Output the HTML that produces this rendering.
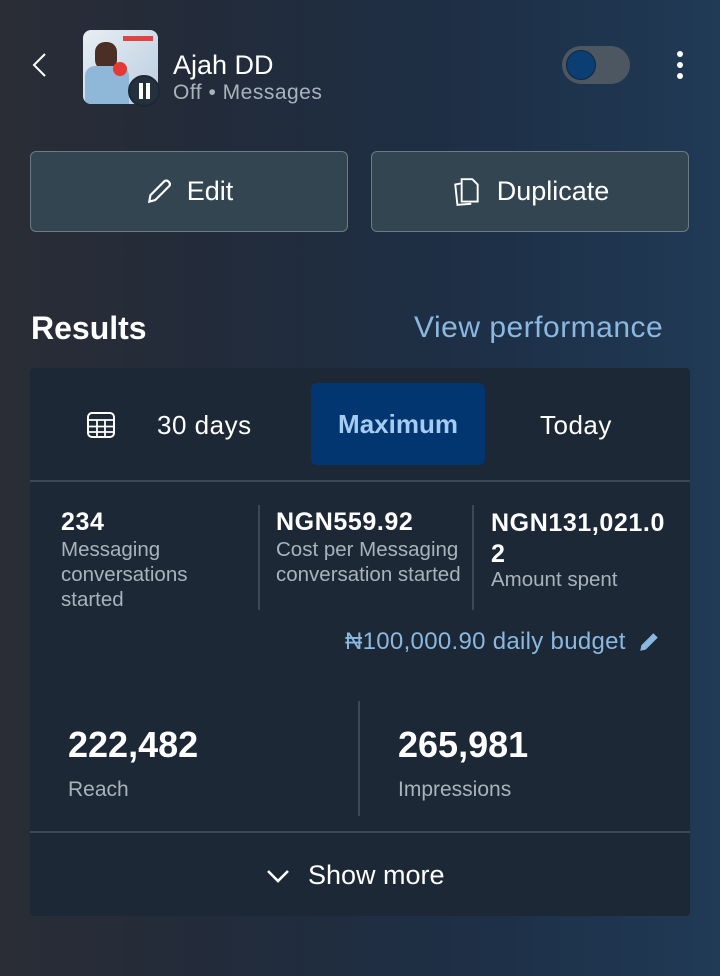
<!DOCTYPE html>
<html><head><meta charset="utf-8"><style>
*{margin:0;padding:0;box-sizing:border-box}
body{width:720px;height:976px;overflow:hidden;font-family:"Liberation Sans",sans-serif;color:#fff;
background:linear-gradient(90deg,#2a2d36 0%,#222b3a 30%,#1d3048 70%,#213a55 100%);position:relative}
.a{position:absolute;white-space:nowrap}
.btn{position:absolute;top:151px;width:318px;height:81px;border:1.5px solid #6a7a86;border-radius:6px;background:#344552;display:flex;align-items:center;justify-content:center;font-size:27px;gap:14px}
.card{position:absolute;left:30px;top:368px;width:660px;height:548px;background:#1c2836;border-radius:4px}
.lbl{color:#a9b3bc;font-size:20.5px;line-height:25px}
.big{font-weight:bold;font-size:25px;letter-spacing:0.6px}
</style></head><body>
<svg class="a" style="left:30px;top:52px" width="18" height="26" viewBox="0 0 18 26"><path d="M15 2 L4 13 L15 24" fill="none" stroke="#fff" stroke-width="2"/></svg>
<div class="a" style="left:83px;top:30px;width:75px;height:74px;border-radius:8px;background:linear-gradient(135deg,#e8eef3,#b9cde0);overflow:hidden">
 <div class="a" style="left:12px;top:12px;width:22px;height:28px;border-radius:10px;background:#4b2e25"></div>
 <div class="a" style="left:2px;top:36px;width:44px;height:40px;background:#8fb8d8;border-radius:10px 10px 0 0"></div>
 <div class="a" style="left:30px;top:32px;width:14px;height:14px;border-radius:50%;background:#e53935"></div>
 <div class="a" style="left:40px;top:6px;width:30px;height:5px;background:#d44"></div>
</div>
<div class="a" style="left:128px;top:75px;width:32px;height:32px;border-radius:50%;background:#24313d;border:2px solid #1c2836"></div>
<div class="a" style="left:139px;top:83px;width:4px;height:16px;background:#fff"></div>
<div class="a" style="left:146px;top:83px;width:4px;height:16px;background:#fff"></div>
<div class="a" style="left:173px;top:50px;font-size:27px">Ajah DD</div>
<div class="a" style="left:173px;top:81px;font-size:21px;letter-spacing:0.5px;color:#a9b3bc">Off • Messages</div>
<div class="a" style="left:562px;top:46px;width:68px;height:38px;border-radius:19px;background:#4c5762"></div>
<div class="a" style="left:566px;top:50px;width:30px;height:30px;border-radius:50%;background:#0b3f73;border:1px solid #12263a"></div>
<div class="a" style="left:677px;top:51px;width:6px;height:6px;border-radius:50%;background:#fff"></div>
<div class="a" style="left:677px;top:62px;width:6px;height:6px;border-radius:50%;background:#fff"></div>
<div class="a" style="left:677px;top:73px;width:6px;height:6px;border-radius:50%;background:#fff"></div>
<div class="btn" style="left:30px"><svg width="28" height="28" viewBox="0 0 26 26"><path d="M4 22 L5 16 L18 3 Q20 1.5 22 3.5 Q24 5.5 22.5 7.5 L9.5 20.5 Z" fill="none" stroke="#fff" stroke-width="2"/></svg>Edit</div>
<div class="btn" style="left:371px"><svg width="32" height="32" viewBox="0 0 30 30"><path d="M10 3 h10 l5 5 v16 h-15 z M9 7 l-5 1 2 19 13 -1" fill="none" stroke="#fff" stroke-width="1.8"/></svg>Duplicate</div>
<div class="a" style="left:31px;top:310px;font-size:32px;font-weight:bold">Results</div>
<div class="a" style="left:414px;top:311px;font-size:30px;letter-spacing:0.5px;color:#8ab8e0">View performance</div>
<div class="card">
 <svg class="a" style="left:56px;top:43px" width="30" height="28" viewBox="0 0 30 28"><rect x="2" y="2" width="26" height="24" rx="4" fill="none" stroke="#fff" stroke-width="2"/><path d="M2 9 h26 M2 15.5 h26 M2 21 h26 M11 9 v17 M19 9 v17" stroke="#fff" stroke-width="1.8"/></svg>
 <div class="a" style="left:127px;top:42px;font-size:26px;letter-spacing:0.5px">30 days</div>
 <div class="a" style="left:281px;top:15px;width:174px;height:82px;background:#023670;border-radius:6px;color:#a6cdf1;font-size:26px;font-weight:bold;text-align:center;line-height:82px">Maximum</div>
 <div class="a" style="left:510px;top:42px;font-size:26px;letter-spacing:0.5px">Today</div>
 <div class="a" style="left:0;top:112px;width:660px;height:2px;background:#3a4955"></div>
 <div class="a" style="left:228px;top:137px;width:2px;height:105px;background:#3a4955"></div>
 <div class="a" style="left:442px;top:137px;width:2px;height:105px;background:#3a4955"></div>
 <div class="a big" style="left:31px;top:140px">234</div>
 <div class="a lbl" style="left:31px;top:169px">Messaging<br>conversations<br>started</div>
 <div class="a big" style="left:246px;top:140px">NGN559.92</div>
 <div class="a lbl" style="left:246px;top:169px">Cost per Messaging<br>conversation started</div>
 <div class="a big" style="left:461px;top:140px;line-height:31px">NGN131,021.0<br>2</div>
 <div class="a lbl" style="left:461px;top:199px">Amount spent</div>
 <div class="a" style="left:315px;top:260px;font-size:24px;letter-spacing:0.3px;color:#8ab8e0">₦100,000.90 daily budget</div>
 <svg class="a" style="left:607px;top:262px" width="24" height="24" viewBox="0 0 22 22"><path d="M3 19 L4 14 L15 3 L19 7 L8 18 Z" fill="#8ab8e0"/></svg>
 <div class="a" style="left:328px;top:333px;width:2px;height:115px;background:#3a4955"></div>
 <div class="a" style="left:38px;top:356px;font-size:36px;font-weight:bold">222,482</div>
 <div class="a lbl" style="left:38px;top:409px;font-size:21px">Reach</div>
 <div class="a" style="left:368px;top:356px;font-size:36px;font-weight:bold">265,981</div>
 <div class="a lbl" style="left:368px;top:409px;font-size:21px">Impressions</div>
 <div class="a" style="left:0;top:463px;width:660px;height:2px;background:#3a4955"></div>
 <svg class="a" style="left:235px;top:499px" width="26" height="18" viewBox="0 0 26 18"><path d="M3 4 L13 14 L23 4" fill="none" stroke="#fff" stroke-width="2.6"/></svg>
 <div class="a" style="left:278px;top:492px;font-size:27px">Show more</div>
</div>
</body></html>
